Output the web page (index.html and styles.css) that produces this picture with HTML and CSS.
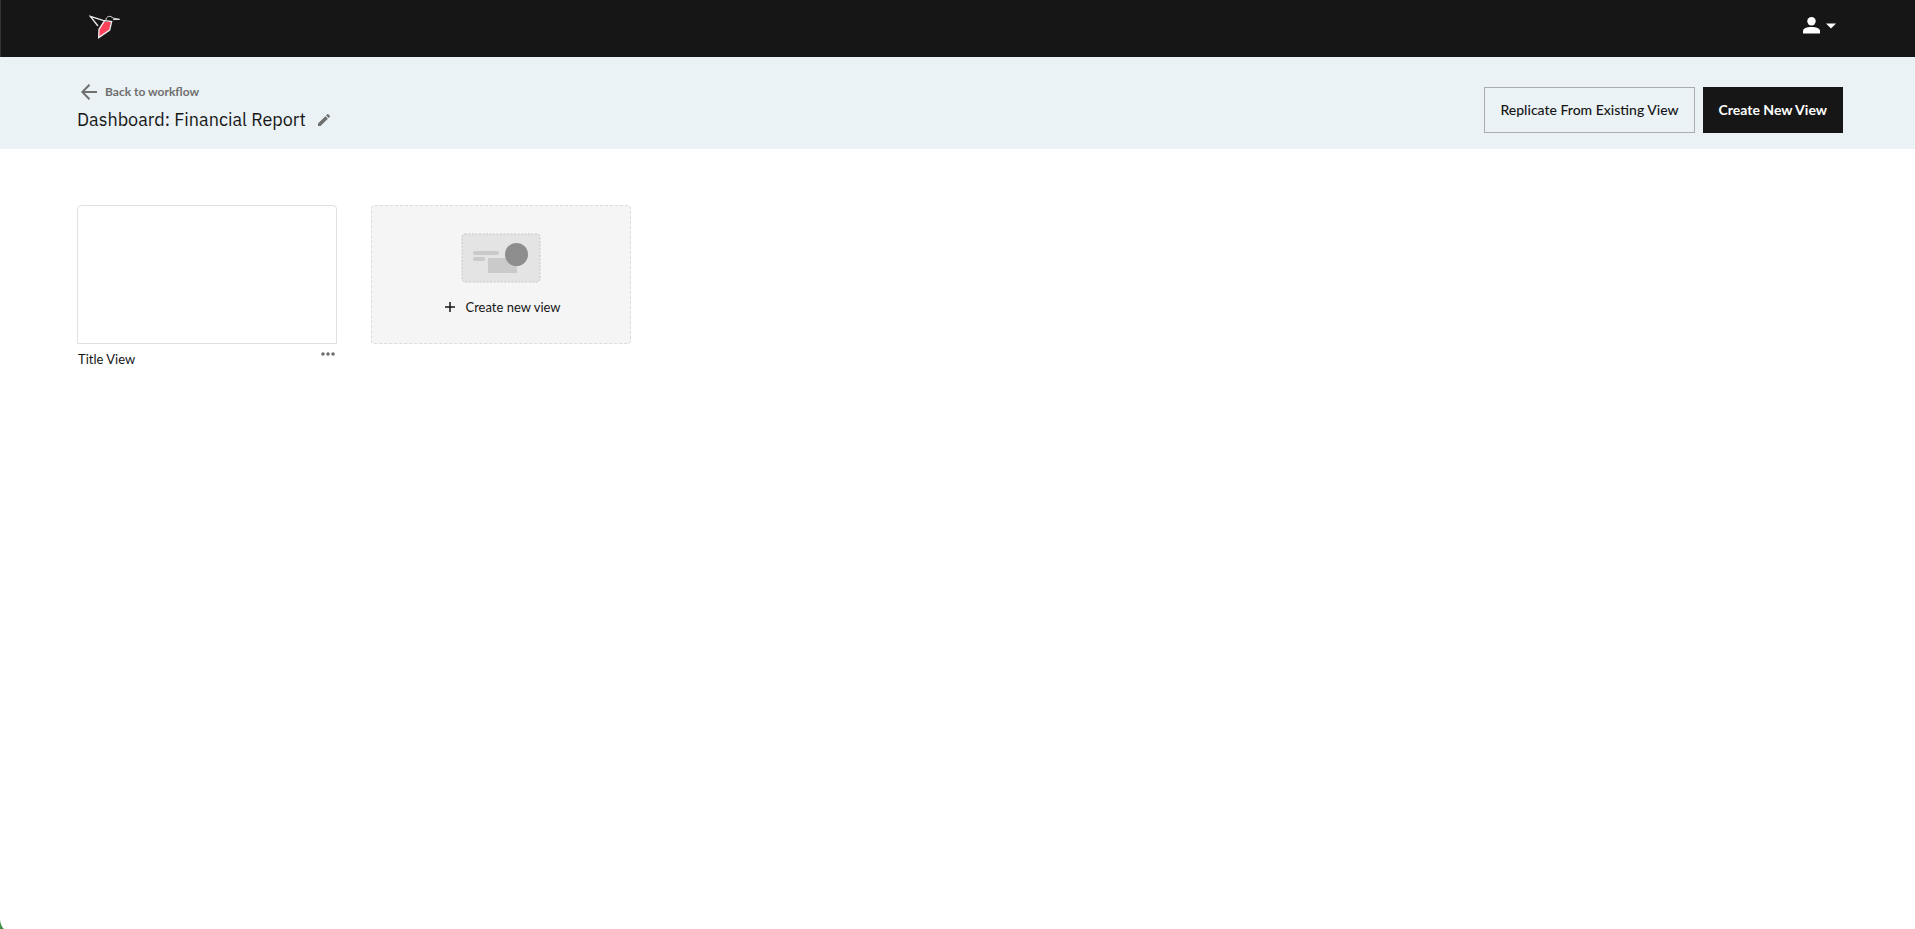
FILE: index.html
```
<!DOCTYPE html>
<html lang="en">
<head>
    <meta charset="UTF-8">
    <meta name="viewport" content="width=device-width, initial-scale=1.0">
    <title>Dashboard: Financial Report</title>
    <link rel="stylesheet" href="styles.css">
</head>
<body>

    <header class="topbar">
        <a href="#" class="logo" aria-label="Home">
            <svg width="32" height="26" viewBox="0 0 96 78" fill="none">
                <path d="M42 20 L66 20 L61 46 L28 68 L30 42 Z" fill="#ff4159"/>
                <path d="M27 33 L4 4 L42 16 L68 20 L62 45 L29 68 L30 43 L47 17" stroke="#eeeeee" stroke-width="4"/>
                <path d="M51 15 C50 4 66 0 71 9 L92 13 L72 14" stroke="#dddddd" stroke-width="3"/>
            </svg>
        </a>
        <button class="user-menu" aria-label="Account">
            <svg width="17" height="17" viewBox="0 0 17 17" fill="#fff">
                <circle cx="8.5" cy="4.2" r="4.2"/>
                <path d="M0 16.5 V14 C0 11.4 4 10 8.5 10 S17 11.4 17 14 V16.5 Z"/>
            </svg>
            <svg width="10" height="6" viewBox="0 0 10 6" fill="#fff">
                <path d="M0 0.5 H10 L5 5.5 Z"/>
            </svg>
        </button>
    </header>

    <section class="page-header">
        <div class="heading">
            <a href="#" class="back-link">
                <svg width="16" height="16" viewBox="0 0 16 16" fill="none" stroke="#6f6f6f" stroke-width="2">
                    <path d="M16 8 H1.5 M8.5 0.7 L1.3 8 L8.5 15.3"/>
                </svg>
                Back to workflow
            </a>
            <div class="title-row">
                <h1>Dashboard: Financial Report</h1>
                <button class="edit" aria-label="Edit name">
                    <svg width="16" height="16" viewBox="0 0 24 24" fill="#6f6f6f">
                        <path d="M3 17.25V21h3.75L17.81 9.94l-3.75-3.75L3 17.25zM20.71 7.04a1 1 0 0 0 0-1.41l-2.34-2.34a1 1 0 0 0-1.41 0l-1.83 1.83 3.75 3.75 1.83-1.83z"/>
                    </svg>
                </button>
            </div>
        </div>
        <div class="actions">
            <button class="btn btn-outline">Replicate From Existing View</button>
            <button class="btn btn-dark">Create New View</button>
        </div>
    </section>

    <main class="views">
        <article class="view">
            <div class="preview"></div>
            <div class="view-footer">
                <span class="view-name">Title View</span>
                <button class="more" aria-label="More options">
                    <svg width="14" height="4" viewBox="0 0 14 4" fill="#6f6f6f">
                        <circle cx="2" cy="2" r="1.8"/>
                        <circle cx="7" cy="2" r="1.8"/>
                        <circle cx="12" cy="2" r="1.8"/>
                    </svg>
                </button>
            </div>
        </article>

        <button class="new-view">
            <svg width="80" height="50" viewBox="0 0 80 50">
                <rect x="1" y="1" width="78" height="48" rx="3" fill="#e4e4e4" stroke="#c6c6c6" stroke-dasharray="2 1.5"/>
                <rect x="12" y="18" width="26" height="4" rx="2" fill="#cacaca"/>
                <rect x="12" y="24" width="12" height="4" rx="2" fill="#cacaca"/>
                <rect x="27" y="25" width="29" height="15" rx="1" fill="#cacaca"/>
                <circle cx="55.5" cy="21.5" r="11.5" fill="#8d8d8d"/>
            </svg>
            <span class="new-view-label">
                <svg width="10" height="10" viewBox="0 0 10 10" stroke="#161616" stroke-width="1.5">
                    <path d="M5 0 V10 M0 5 H10"/>
                </svg>
                Create new view
            </span>
        </button>
    </main>

    <div class="corner-badge">
        <svg width="4" height="9" viewBox="0 0 4 9" fill="#3f8f46">
            <path d="M0 0 C0.6 4 2 7.5 4 9 H0 Z"/>
        </svg>
    </div>

</body>
</html>
```

FILE: styles.css
```
* {
    box-sizing: border-box;
}

body {
    margin: 0;
    font-family: Lato, sans-serif;
    color: #161616;
    background-color: #fff;
}

button {
    font-family: inherit;
    color: inherit;
    padding: 0;
    border: none;
    background: none;
    cursor: pointer;
}

svg {
    display: block;
}

.topbar {
    display: flex;
    justify-content: space-between;
    align-items: flex-start;
    height: 57px;
    padding: 15px 79px 0 88px;
    background-color: #161616;
    border-left: 1px solid #333;
}

.user-menu {
    display: flex;
    align-items: center;
    gap: 6px;
    margin-top: 2px;
}

.page-header {
    display: flex;
    justify-content: space-between;
    align-items: flex-start;
    min-height: 92px;
    padding: 25px 72px 16px 77px;
    background-color: #eaf2f5;
}

.back-link {
    display: flex;
    align-items: center;
    gap: 8px;
    padding-left: 4px;
    line-height: 20px;
    font-size: 12px;
    font-weight: bold;
    color: #6f6f6f;
    text-decoration: none;
}

.title-row {
    display: flex;
    align-items: center;
    gap: 10px;
    margin-top: 6px;
}

h1 {
    margin: 0;
    font-family: "IBM Plex Sans", Roboto, sans-serif;
    font-size: 18px;
    font-weight: normal;
    line-height: 24px;
}

.actions {
    display: flex;
    gap: 8px;
    margin-top: 5px;
}

.btn {
    height: 46px;
    padding: 0 15px 2px;
    font-size: 14px;
    font-weight: 500;
    border: 1px solid #161616;
}

.btn-outline {
    border-color: #a8adaf;
}

.btn-dark {
    background-color: #161616;
    color: #fff;
    font-weight: bold;
}

.views {
    display: flex;
    flex-wrap: wrap;
    align-items: flex-start;
    gap: 34px;
    padding: 56px 77px;
}

.view {
    width: 260px;
}

.preview {
    height: 139px;
    border: 1px solid #e0e0e0;
    border-radius: 4px 4px 0 0;
}

.view-footer {
    display: flex;
    justify-content: space-between;
    align-items: flex-start;
    padding: 8px 2px 0 1px;
}

.view-name {
    font-size: 13px;
    line-height: 14px;
}

.new-view {
    display: flex;
    flex-direction: column;
    align-items: center;
    gap: 16px;
    width: 260px;
    height: 139px;
    padding-top: 27px;
    background-color: #f5f5f5;
    border: 1px dashed #dcdcdc;
    border-radius: 4px;
}

.new-view-label {
    display: flex;
    align-items: center;
    gap: 10px;
    padding-left: 4px;
    font-size: 13px;
    line-height: 16px;
}

/* only the edge of the badge peeks into the window */
.corner-badge {
    position: fixed;
    left: 0;
    bottom: 0;
}
```
